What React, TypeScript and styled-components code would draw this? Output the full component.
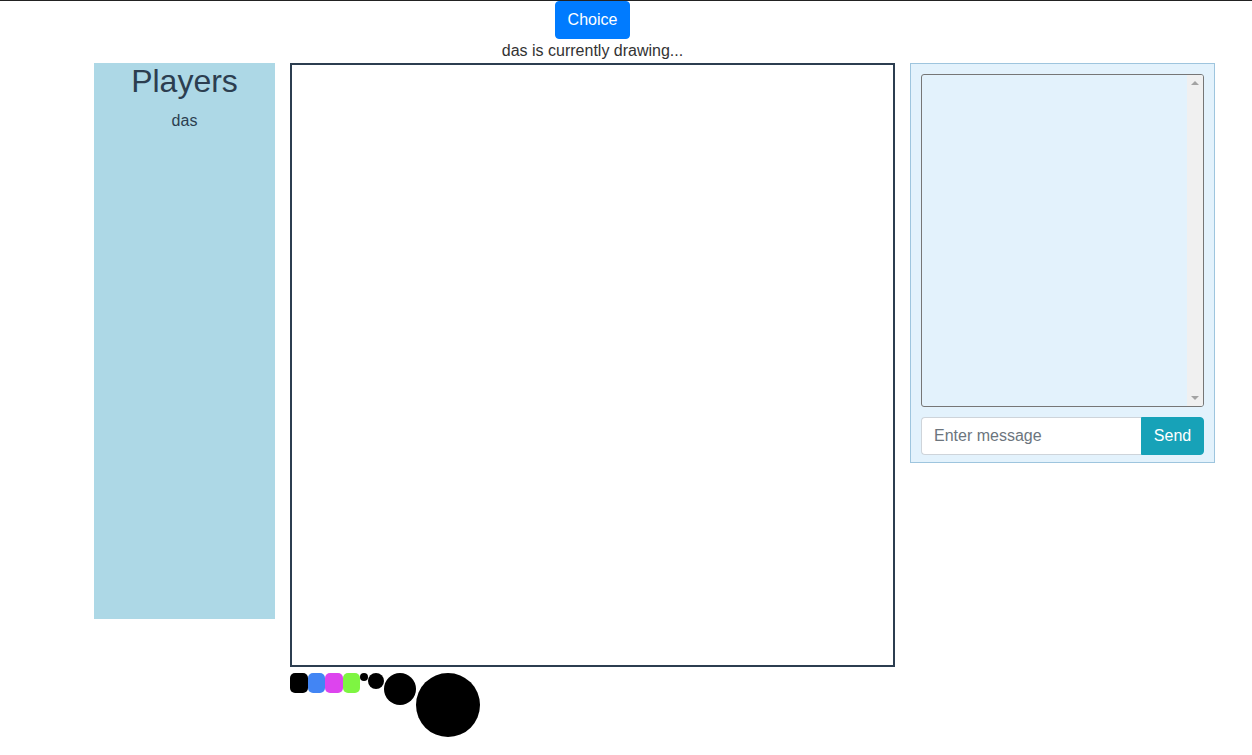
import styled, { createGlobalStyle } from "styled-components";

const GlobalStyle = createGlobalStyle`
    html, body {
        margin: 0;
        padding: 0;
        background: #ffffff;
    }
    body {
        font-family: "Liberation Sans", Arial, Helvetica, sans-serif;
        color: #2c3e50;
        border-top: 1px solid #222222;
    }
`;

const colours = ["#000000", "#4285f4", "#dd44ee", "#7ef542"];
const sizes = [8, 16, 32, 64];

const App = () => {
    return (
        <>
            <GlobalStyle />
            <Game>
                <Header>
                    <ChoiceButton>Choice</ChoiceButton>
                    <Status>das is currently drawing...</Status>
                </Header>
                <PlayersPanel>
                    <PlayersTitle>Players</PlayersTitle>
                    <PlayerName>das</PlayerName>
                </PlayersPanel>
                <DrawColumn>
                    <Board width={600} height={600} />
                    <Palette>
                        {colours.map((c) => (
                            <Swatch key={c} $colour={c} />
                        ))}
                        {sizes.map((s) => (
                            <Brush key={s} $size={s} />
                        ))}
                    </Palette>
                </DrawColumn>
                <ChatPanel>
                    <LogWrap>
                        <ChatLog readOnly />
                        <ScrollTrack>
                            <Arrow $up />
                            <Arrow />
                        </ScrollTrack>
                    </LogWrap>
                    <InputGroup>
                        <MessageInput placeholder="Enter message" />
                        <SendButton>Send</SendButton>
                    </InputGroup>
                </ChatPanel>
            </Game>
        </>
    );
};

export default App;

const Game = styled.div`
    display: grid;
    grid-template-columns: 181px 605px 305px;
    grid-template-rows: auto auto;
    column-gap: 15px;
    padding-left: 94px;
    align-items: start;
`;

const Header = styled.div`
    grid-column: 2;
    grid-row: 1;
    display: flex;
    flex-direction: column;
    align-items: center;
`;

const ChoiceButton = styled.button`
    height: 38px;
    padding: 0 12px;
    background-color: #007bff;
    color: #ffffff;
    border: 1px solid #007bff;
    border-radius: 4px;
    font-family: "Liberation Sans", Arial, sans-serif;
    font-size: 16px;
    cursor: pointer;
`;

const Status = styled.div`
    font-size: 16px;
    line-height: 24px;
    color: #333333;
`;

const PlayersPanel = styled.div`
    grid-column: 1;
    grid-row: 2;
    height: 556px;
    background-color: #add8e6;
    text-align: center;
`;

const PlayersTitle = styled.h2`
    margin: 0;
    font-size: 32px;
    font-weight: normal;
    line-height: 37px;
`;

const PlayerName = styled.p`
    margin: 12px 0 0;
    font-size: 16px;
    color: #2c3e50;
`;

const DrawColumn = styled.div`
    grid-column: 2;
    grid-row: 2;
`;

const Board = styled.canvas`
    display: block;
    width: 601px;
    height: 600px;
    border: 2px solid #2c3e50;
    background: #ffffff;
`;

const Palette = styled.div`
    display: flex;
    align-items: flex-start;
    margin-top: 6px;
`;

const Swatch = styled.div<{ $colour: string }>`
    width: 17.5px;
    height: 20px;
    border-radius: 5px;
    background-color: ${(p) => p.$colour};
`;

const Brush = styled.div<{ $size: number }>`
    width: ${(p) => p.$size}px;
    height: ${(p) => p.$size}px;
    border-radius: 50%;
    background-color: #000000;
`;

const ChatPanel = styled.div`
    grid-column: 3;
    grid-row: 2;
    box-sizing: border-box;
    height: 400px;
    padding: 10px;
    background-color: #e3f2fc;
    border: 1px solid #9ec5de;
`;

const LogWrap = styled.div`
    position: relative;
    width: 283px;
    height: 333px;
`;

const ChatLog = styled.textarea`
    display: block;
    box-sizing: border-box;
    width: 283px;
    height: 333px;
    margin: 0;
    padding: 2px 19px 2px 4px;
    background: transparent;
    border: 1px solid #767676;
    border-radius: 3px;
    overflow: hidden;
    resize: none;
`;

const ScrollTrack = styled.div`
    position: absolute;
    top: 1px;
    right: 1px;
    bottom: 1px;
    width: 16px;
    background-color: #f0f0f0;
    border-radius: 0 2px 2px 0;
    display: flex;
    flex-direction: column;
    justify-content: space-between;
    align-items: center;
    padding: 6px 0;
    box-sizing: border-box;
`;

const Arrow = styled.div<{ $up?: boolean }>`
    width: 0;
    height: 0;
    border-left: 4px solid transparent;
    border-right: 4px solid transparent;
    ${(p) =>
        p.$up
            ? "border-bottom: 4px solid #a3a3a3;"
            : "border-top: 4px solid #a3a3a3;"}
`;

const InputGroup = styled.div`
    display: flex;
    margin-top: 10px;
    height: 38px;
`;

const MessageInput = styled.input`
    box-sizing: border-box;
    flex: 1;
    min-width: 0;
    height: 38px;
    padding: 6px 12px;
    border: 1px solid #ced4da;
    border-right: none;
    border-radius: 4px 0 0 4px;
    font-family: "Liberation Sans", Arial, sans-serif;
    font-size: 16px;
    color: #495057;
    outline: none;
    &::placeholder {
        color: #6c757d;
    }
`;

const SendButton = styled.button`
    box-sizing: border-box;
    width: 63px;
    height: 38px;
    background-color: #17a2b8;
    border: 1px solid #17a2b8;
    border-radius: 0 4px 4px 0;
    color: #ffffff;
    font-family: "Liberation Sans", Arial, sans-serif;
    font-size: 16px;
    cursor: pointer;
`;
